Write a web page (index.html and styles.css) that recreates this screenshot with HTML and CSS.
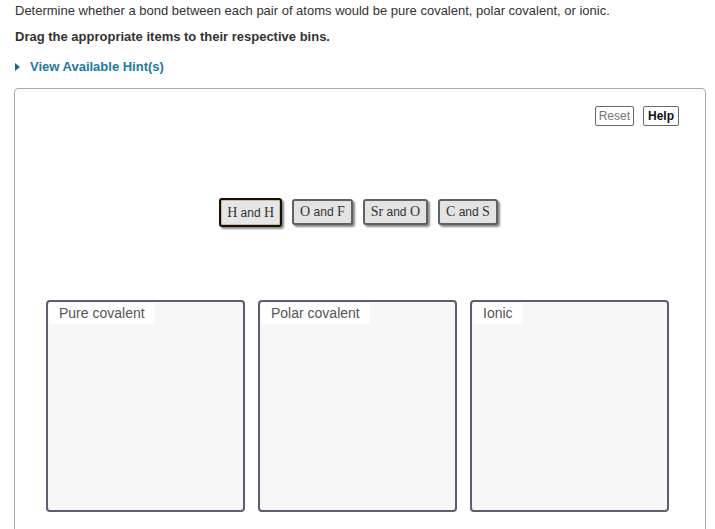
FILE: index.html
```html
<!DOCTYPE html>
<html>
<head>
<meta charset="utf-8">
<link rel="stylesheet" href="styles.css">
</head>
<body>
<div class="page">
  <p class="intro">Determine whether a bond between each pair of atoms would be pure covalent, polar covalent, or ionic.</p>
  <p class="instr">Drag the appropriate items to their respective bins.</p>
  <div class="hint"><span class="tri"></span>View Available Hint(s)</div>
  <div class="panel">
    <div class="tools">
      <button class="btn reset">Reset</button>
      <button class="btn help">Help</button>
    </div>
    <div class="items">
      <div class="item selected"><span class="m">H</span> and <span class="m">H</span></div>
      <div class="item"><span class="m">O</span> and <span class="m">F</span></div>
      <div class="item"><span class="m">Sr</span> and <span class="m">O</span></div>
      <div class="item"><span class="m">C</span> and <span class="m">S</span></div>
    </div>
    <div class="bins">
      <div class="bin"><div class="label">Pure covalent</div></div>
      <div class="bin"><div class="label">Polar covalent</div></div>
      <div class="bin"><div class="label">Ionic</div></div>
    </div>
  </div>
</div>
</body>
</html>
```
FILE: styles.css
```css
html, body {
  margin: 0;
  padding: 0;
  background: #fff;
  overflow: hidden;
}
body {
  font-family: "Liberation Sans", Arial, sans-serif;
  color: #333;
}
.page {
  padding: 3px 9px 0 15px;
}
.intro {
  margin: 0;
  font-size: 13px;
  line-height: 16px;
}
.instr {
  margin: 10px 0 0;
  font-size: 13px;
  font-weight: bold;
  line-height: 16px;
}
.hint {
  margin-top: 14px;
  font-size: 13px;
  font-weight: bold;
  color: #1a7ba4;
  line-height: 16px;
  display: flex;
  align-items: center;
}
.tri {
  width: 0;
  height: 0;
  border-left: 5px solid #1a6a8a;
  border-top: 4px solid transparent;
  border-bottom: 4px solid transparent;
  margin-right: 10px;
}
.panel {
  margin-top: 13px;
  margin-left: -1px;
  border: 1px solid #aaa;
  border-radius: 4px;
  height: 460px;
  padding: 0 26px 0 31px;
}
.tools {
  display: flex;
  justify-content: flex-end;
  gap: 9px;
  padding-top: 17px;
}
.btn {
  font-family: "Liberation Sans", Arial, sans-serif;
  font-size: 12px;
  font-weight: bold;
  height: 20px;
  padding: 0 4px;
  border: 1px solid #606b70;
  border-radius: 2px;
  background: #fff;
  line-height: 16px;
}
.reset {
  color: #777;
  font-weight: normal;
  padding: 0 3px;
}
.help {
  color: #111;
}
.items {
  display: flex;
  justify-content: center;
  gap: 10px;
  margin-top: 73px;
  margin-right: 8px;
}
.item {
  height: 26px;
  box-sizing: border-box;
  padding: 0 6px;
  border: 2px solid #5f6068;
  border-radius: 3px;
  background: #e3e3e3;
  box-shadow: 2px 2px 2px #888;
  font-size: 12px;
  line-height: 22px;
  color: #333;
}
.item .m {
  font-family: "Liberation Serif", "Times New Roman", serif;
  font-size: 14px;
}
.item.selected {
  border: 2px solid #111;
  box-shadow: inset 0 0 0 1px #d8b888, 2px 2px 2px #888;
  background: #e6e6e6;
  height: 29px;
  line-height: 25px;
  margin-top: -1px;
  padding: 0 6px;
}
.bins {
  display: flex;
  gap: 13px;
  margin-top: 73px;
}
.bin {
  width: 199px;
  height: 212px;
  box-sizing: border-box;
  border: 2px solid #5d5e6e;
  border-radius: 4px;
  background: #f7f7f7;
  padding: 1px;
}
.label {
  display: inline-block;
  background: #fff;
  color: #555;
  font-size: 14px;
  line-height: 21px;
  padding: 0 10px;
}
```
